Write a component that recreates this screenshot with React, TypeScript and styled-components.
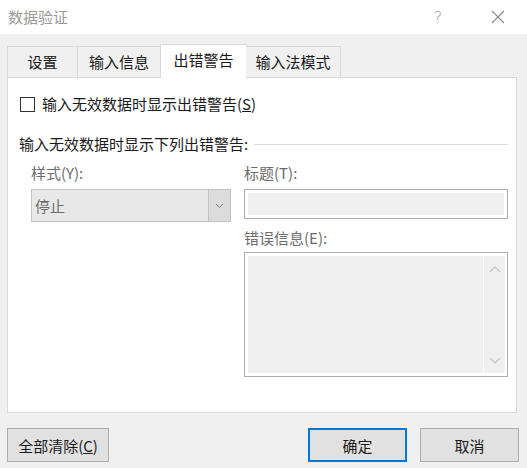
import * as React from "react";
import styled, { createGlobalStyle } from "styled-components";

const GlobalStyles = createGlobalStyle`
  html, body {
    margin: 0;
    padding: 0;
    background: #f0f0f0;
  }
  body {
    font-family: "Noto Sans CJK SC", "Noto Sans", sans-serif;
    font-size: 15px;
    color: #1a1a1a;
  }
`;

const tabs = [
  { label: "设置", width: 71 },
  { label: "输入信息", width: 83 },
  { label: "出错警告", width: 87, active: true },
  { label: "输入法模式", width: 95 },
];

export default function App() {
  return (
    <>
      <GlobalStyles />
      <Window>
        <TitleBar>
          <Title>数据验证</Title>
          <HelpMark>?</HelpMark>
          <CloseButton>
            <svg width="14" height="14" viewBox="0 0 14 14">
              <path d="M1 1 L13 13 M13 1 L1 13" stroke="#8a8a8a" strokeWidth="1.1" fill="none" />
            </svg>
          </CloseButton>
        </TitleBar>

        <TabBar>
          {tabs.map((t) => (
            <Tab key={t.label} $width={t.width} $active={!!t.active}>
              {t.label}
            </Tab>
          ))}
        </TabBar>

        <Panel>
          <CheckRow>
            <CheckBox />
            <span>
              输入无效数据时显示出错警告(<u>S</u>)
            </span>
          </CheckRow>

          <GroupHeader>
            <span>输入无效数据时显示下列出错警告:</span>
            <GroupLine />
          </GroupHeader>

          <Fields>
            <Column>
              <FieldLabel>样式(Y):</FieldLabel>
              <Select>
                <SelectValue>停止</SelectValue>
                <SelectButton>
                  <svg width="9" height="6" viewBox="0 0 9 6">
                    <path d="M1 1 L4.5 4.5 L8 1" stroke="#7a7a7a" strokeWidth="1" fill="none" />
                  </svg>
                </SelectButton>
              </Select>
            </Column>
            <Column>
              <FieldLabel>标题(T):</FieldLabel>
              <TextBox />
              <FieldLabel $top={9}>错误信息(E):</FieldLabel>
              <TextArea>
                <AreaFill />
                <ScrollTrack>
                  <svg width="12" height="8" viewBox="0 0 12 8">
                    <path d="M1 7 L6 2 L11 7" stroke="#c4c4c4" strokeWidth="1.3" fill="none" />
                  </svg>
                  <svg width="12" height="8" viewBox="0 0 12 8">
                    <path d="M1 1 L6 6 L11 1" stroke="#c4c4c4" strokeWidth="1.3" fill="none" />
                  </svg>
                </ScrollTrack>
              </TextArea>
            </Column>
          </Fields>
        </Panel>

        <Footer>
          <Button $width={102}>
            全部清除(<u>C</u>)
          </Button>
          <ButtonGroup>
            <Button $width={99} $primary>
              确定
            </Button>
            <Button $width={99}>取消</Button>
          </ButtonGroup>
        </Footer>
      </Window>
    </>
  );
}

const Window = styled.div`
  width: 527px;
  height: 468px;
  background: #f0f0f0;
  display: flex;
  flex-direction: column;
  overflow: hidden;
`;

const TitleBar = styled.div`
  height: 34px;
  background: #fff;
  display: flex;
  align-items: center;
  padding-left: 8px;
  flex-shrink: 0;
`;

const Title = styled.div`
  color: #9a9a9a;
  font-size: 15px;
  line-height: 20px;
  flex: 1;
`;

const HelpMark = styled.div`
  color: #9a9a9a;
  font-family: "DejaVu Sans", sans-serif;
  font-weight: 300;
  font-size: 16px;
  width: 14px;
  text-align: center;
  margin-right: 46px;
`;

const CloseButton = styled.div`
  width: 14px;
  height: 14px;
  display: flex;
  margin-right: 22px;
`;

const TabBar = styled.div`
  display: flex;
  align-items: flex-end;
  height: 33px;
  margin-top: 10px;
  padding-left: 7px;
  position: relative;
  z-index: 1;
`;

const Tab = styled.div<{ $width: number; $active: boolean }>`
  width: ${(p) => p.$width}px;
  box-sizing: border-box;
  height: ${(p) => (p.$active ? 34 : 31)}px;
  margin-bottom: ${(p) => (p.$active ? -1 : 0)}px;
  margin-left: ${(p) => (p.$active ? -1 : 0)}px;
  margin-right: ${(p) => (p.$active ? -1 : 0)}px;
  background: ${(p) => (p.$active ? "#fff" : "#f0f0f0")};
  border: 1px solid #d9d9d9;
  border-bottom: none;
  border-left-width: ${(p) => (p.$active ? 1 : 0)}px;
  &:first-child {
    border-left-width: 1px;
  }
  display: flex;
  align-items: center;
  justify-content: center;
  padding-bottom: ${(p) => (p.$active ? 4 : 1)}px;
  font-size: 15px;
  color: #1a1a1a;
`;

const Panel = styled.div`
  height: 336px;
  box-sizing: border-box;
  margin: 0 10px 0 7px;
  background: #fff;
  border: 1px solid #d9d9d9;
  padding: 16px 8px 0 11px;
  display: flex;
  flex-direction: column;
  flex-shrink: 0;
`;

const CheckRow = styled.div`
  display: flex;
  align-items: center;
  gap: 7px;
  height: 20px;
  line-height: 20px;
`;

const CheckBox = styled.div`
  width: 13px;
  height: 13px;
  border: 1px solid #333;
  background: #fff;
  flex-shrink: 0;
  margin-left: 1px;
`;

const GroupHeader = styled.div`
  display: flex;
  align-items: center;
  gap: 6px;
  height: 20px;
  line-height: 20px;
  margin-top: 20px;
`;

const GroupLine = styled.div`
  flex: 1;
  height: 1px;
  background: #dcdcdc;
`;

const Fields = styled.div`
  display: grid;
  grid-template-columns: 200px 264px;
  column-gap: 13px;
  margin-top: 9px;
  padding-left: 12px;
`;

const Column = styled.div`
  display: flex;
  flex-direction: column;
`;

const FieldLabel = styled.div<{ $top?: number }>`
  color: #6d6d6d;
  height: 20px;
  line-height: 20px;
  margin-top: ${(p) => p.$top ?? 0}px;
  margin-bottom: 5px;
`;

const Select = styled.div`
  height: 33px;
  box-sizing: border-box;
  border: 1px solid #c2c2c2;
  background: #e8e8e8;
  display: flex;
  margin-top: 1px;
`;

const SelectValue = styled.div`
  flex: 1;
  display: flex;
  align-items: center;
  padding-left: 3px;
  color: #6d6d6d;
`;

const SelectButton = styled.div`
  width: 21px;
  border-left: 1px solid #c2c2c2;
  background: #dcdcdc;
  display: flex;
  align-items: center;
  justify-content: center;
`;

const TextBox = styled.div`
  height: 30px;
  box-sizing: border-box;
  border: 1px solid #adadad;
  background: #f0f0f0;
  box-shadow: inset 0 0 0 3px #fff;
  margin-top: 1px;
`;

const TextArea = styled.div`
  height: 125px;
  box-sizing: border-box;
  border: 1px solid #adadad;
  padding: 3px 2px 3px 3px;
  background: #fff;
  display: flex;
  margin-top: -1px;
`;

const AreaFill = styled.div`
  flex: 1;
  background: #f0f0f0;
`;

const ScrollTrack = styled.div`
  width: 21px;
  border-left: 1px solid #fff;
  background: #f0f0f0;
  display: flex;
  flex-direction: column;
  justify-content: space-between;
  align-items: center;
  padding: 9px 0 8px;
`;

const Footer = styled.div`
  display: flex;
  justify-content: space-between;
  padding: 15px 8px 0 7px;
`;

const ButtonGroup = styled.div`
  display: flex;
  gap: 13px;
`;

const Button = styled.div<{ $width: number; $primary?: boolean }>`
  width: ${(p) => p.$width}px;
  height: 34px;
  box-sizing: border-box;
  background: #e1e1e1;
  border: ${(p) => (p.$primary ? "2px solid #0078d7" : "1px solid #adadad")};
  display: flex;
  align-items: center;
  justify-content: center;
  font-size: 15px;
  color: #1a1a1a;
`;
